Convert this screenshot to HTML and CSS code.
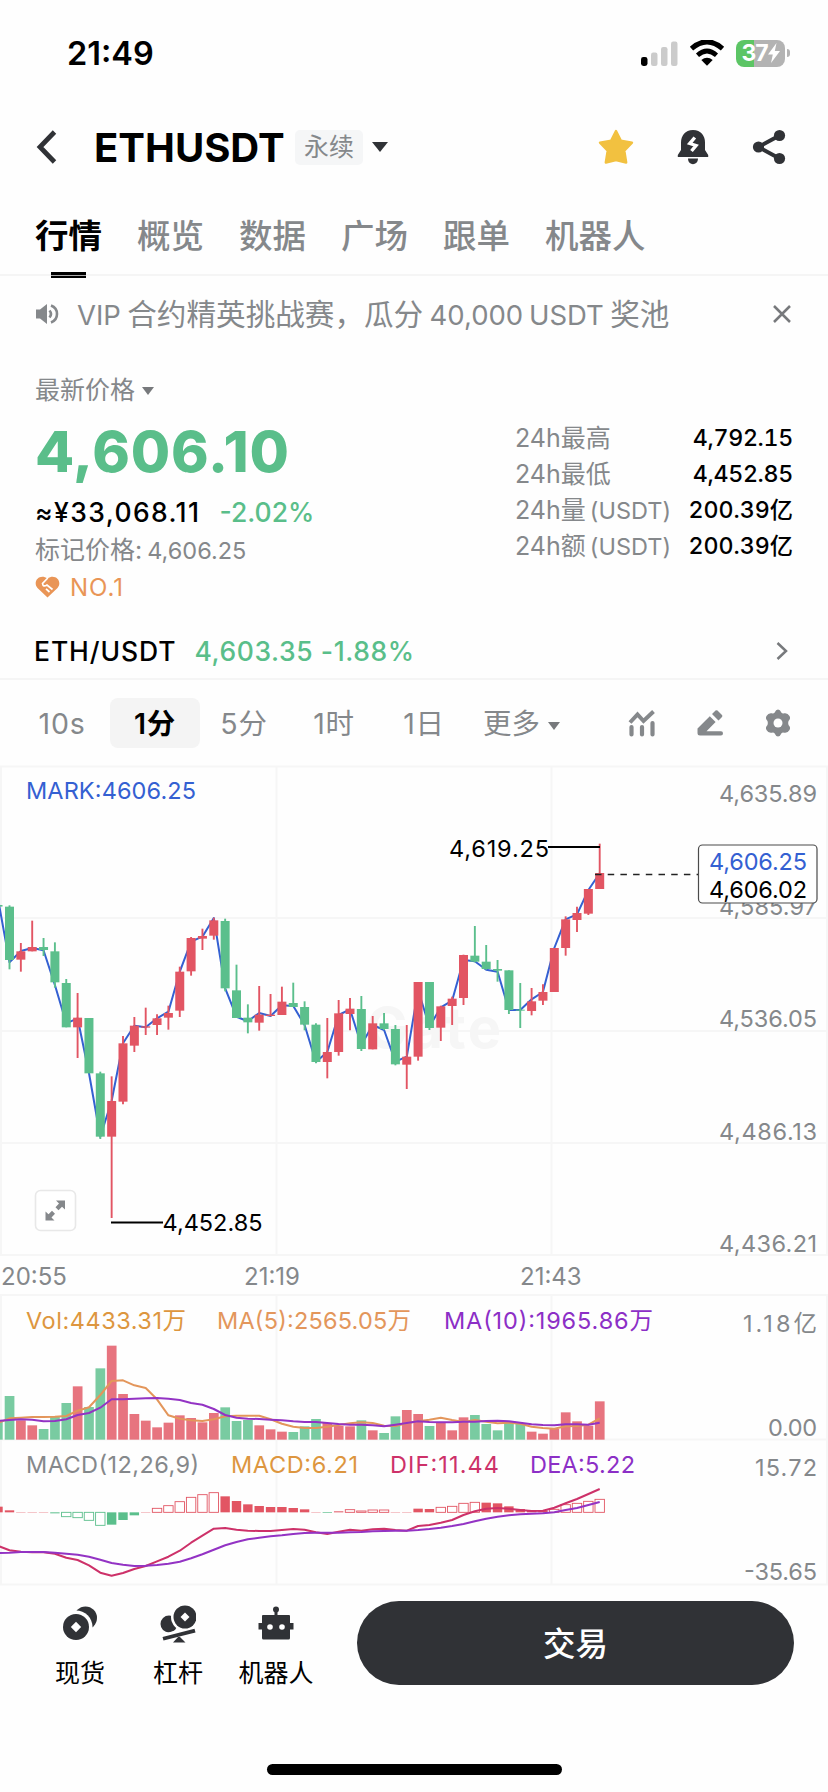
FILE: index.html
```html
<!DOCTYPE html>
<html lang="zh-CN">
  <head>
    <meta charset="utf-8">
    <title>ETHUSDT 永续</title>
    <link rel="stylesheet" href="styles.css">
  </head>
  <body>
    <div class="statusbar">
      <span class="clock">21:49</span>
      <div class="status-icons">
        <svg width="37" height="25" viewBox="0 0 37 25">
          <rect x="0" y="16" width="6.5" height="9" rx="2.4" fill="#000"/>
          <rect x="10" y="11.5" width="6.5" height="13.5" rx="2.2" fill="#cbcbcb"/>
          <rect x="20" y="6" width="6.5" height="19" rx="2.2" fill="#cbcbcb"/>
          <rect x="30" y="0.5" width="6.5" height="24.5" rx="2.2" fill="#cbcbcb"/>
        </svg>
        <svg class="wifi" width="36" height="26" viewBox="0 0 36 26">
          <path d="M2.5 8.6 Q18 -5 33.500 8.600" fill="none" stroke="#000" stroke-width="5"/>
          <path d="M8.500 15.200 Q18 6.800 27.500 15.200" fill="none" stroke="#000" stroke-width="4.600"/>
          <path d="M12.300 20 Q18 15.500 23.700 20 L18 25.800 Z"/>
        </svg>
        <div class="battery">37<svg width="12" height="20" viewBox="0 0 12 20"><path d="M8.500 0 L0 11.500 H4.800 L3 20 L12 8 H6.800 Z" fill="#fff"/></svg></div>
        <i class="battery-tip"></i>
      </div>
    </div>

    <header class="header">
      <svg class="back" width="22" height="34" viewBox="0 0 22 34"><path d="M19.500 2 L5 17 L19.500 32" fill="none" stroke="#303236" stroke-width="4.800"/></svg>
      <h1>ETHUSDT</h1>
      <span class="badge">永续</span>
      <i class="caret caret-big"></i>
      <div class="header-icons">
        <svg width="36" height="36" viewBox="0 0 36 36"><path d="M18 2 L22.800 11.600 L34 13.600 L26.300 21.700 L28.200 33.500 L18 31 L7.800 33.500 L9.700 21.700 L2 13.600 L13.200 11.600 Z" fill="#f2c140" stroke="#f2c140" stroke-width="2.400" stroke-linejoin="round"/></svg>
        <svg width="32" height="36" viewBox="0 0 32 36">
          <path d="M16 1 C8 1 4 7 4 13.500 V21 L0.800 26 V28 H31.200 V26 L28 21 V13.500 C28 7 24 1 16 1 Z M11 29.500 H21 C21 37 11 37 11 29.500 Z" fill="#303236"/>
          <path d="M17.800 8.500 L12.800 14.500 L19 16.500 L14.500 22" fill="none" stroke="#fff" stroke-width="3.400"/>
        </svg>
        <svg width="34" height="36" viewBox="0 0 34 36">
          <path d="M27.500 6.500 L6.500 18 L27.500 29.500" fill="none" stroke="#303236" stroke-width="4"/>
          <circle cx="27.500" cy="6.500" r="5.600" fill="#303236"/><circle cx="6.500" cy="18" r="5.600" fill="#303236"/><circle cx="27.500" cy="29.500" r="5.600" fill="#303236"/>
        </svg>
      </div>
    </header>

    <nav class="tabs">
      <a class="active">行情</a><a>概览</a><a>数据</a><a>广场</a><a>跟单</a><a>机器人</a>
    </nav>

    <div class="notice">
      <svg width="23" height="22" viewBox="0 0 23 22">
        <path d="M0 6.500 H4 L11 1 V21 L4 15.500 H0 Z" fill="#85888b"/>
        <path d="M13.500 7.500 Q16.500 11 13.500 14.500 M15 2.500 C23 5.500 23 16.500 15 19.500" fill="none" stroke="#85888b" stroke-width="2.600"/>
      </svg>
      <span class="notice-text"><b>VIP</b> 合约精英挑战赛，瓜分 <b>40,000 USDT</b> 奖池</span>
      <svg class="close" width="18" height="18" viewBox="0 0 18 18"><path d="M1 1 L17 17 M17 1 L1 17" stroke="#77797c" stroke-width="2.500"/></svg>
    </div>

    <section class="ticker">
      <div class="price">
        <div class="price-type">最新价格 <i class="caret"></i></div>
        <div class="last">4,606.10</div>
        <div class="fiat"><span class="cny">≈¥33,068.11</span><span class="change">-2.02%</span></div>
        <div class="mark">标记价格: <span>4,606.25</span></div>
        <div class="rank">
          <svg width="25" height="22" viewBox="0 0 25 22">
            <path d="M12.500 21.500 L2.500 12 C-3 5 5 -3 12.500 2.500 C20 -3 28 5 22.500 12 Z" fill="#e99556"/>
            <path d="M12.800 2 L7.500 7.500 Q8 11.500 12 9 L17.500 13.500 M11 12.800 L14.500 16" fill="none" stroke="#fff" stroke-width="1.700"/>
          </svg>
          NO.1
        </div>
      </div>
      <dl class="stats">
        <dt>24h最高</dt><dd>4,792.15</dd>
        <dt>24h最低</dt><dd>4,452.85</dd>
        <dt>24h量 <span>(USDT)</span></dt><dd class="amount">200.39亿</dd>
        <dt>24h额 <span>(USDT)</span></dt><dd class="amount">200.39亿</dd>
      </dl>
    </section>

    <div class="spot">
      <span class="spot-pair">ETH/USDT</span>
      <span class="spot-price">4,603.35 -1.88%</span>
      <svg width="12" height="18" viewBox="0 0 12 18"><path d="M1.500 1 L10 9 L1.500 17" fill="none" stroke="#77797c" stroke-width="2.500"/></svg>
    </div>

    <div class="intervals">
      <div class="interval-list">
        <span>10s</span><span class="active">1分</span><span>5分</span><span>1时</span><span>1日</span><span class="more">更多<i class="caret"></i></span>
      </div>
      <div class="tools">
        <svg width="28" height="28" viewBox="0 0 28 28">
          <path d="M2 13.500 L9.500 5.500 L15.500 12 L25.500 2.500" fill="none" stroke="#85888b" stroke-width="4"/>
          <path d="M3.500 18 V25.500 M14 18 V25.500 M24.500 14 V25.500" stroke="#85888b" stroke-width="4.200" stroke-linecap="round"/>
        </svg>
        <svg width="27" height="27" viewBox="0 0 27 27">
          <path d="M12.800 7.200 L18.600 13 L9.500 22.300 H24 Q26 22.300 26 24.300 Q26 26.500 24 26.500 H3 Q0.500 26.500 0.500 24 V19.500 Z M18.500 1.500 Q19.500 0.800 20.500 1.500 L25 6 Q25.800 7 25 8 L21.500 11.500 L15 5 Z" fill="#85888b"/>
        </svg>
        <svg width="26" height="28" viewBox="0 0 26 28">
          <path d="M13 0.500 Q15 0.500 16.500 3.800 Q17.500 4.800 19 4.300 Q22.500 3.500 24.500 7 Q26 9.500 23.500 12 Q22.800 14 23.500 16 Q26 18.500 24.500 21 Q22.500 24.500 19 23.700 Q17.500 23.200 16.500 24.200 Q15 27.500 13 27.500 Q11 27.500 9.500 24.200 Q8.500 23.200 7 23.700 Q3.500 24.500 1.500 21 Q0 18.500 2.500 16 Q3.200 14 2.500 12 Q0 9.500 1.500 7 Q3.500 3.500 7 4.300 Q8.500 4.800 9.500 3.800 Q11 0.500 13 0.500 Z" fill="#85888b"/>
          <circle cx="13" cy="14" r="4.500" fill="#fff"/>
        </svg>
      </div>
    </div>

    <section class="charts">
      <svg id="kline" width="828" height="490" viewBox="0 6 828 490">
        <g class="grid"><path d="M0 6.500 H828 M0 158 H828 M0 271 H828 M0 383 H828 M0 495 H828 M1 6 V496 M276.500 6 V496 M551.500 6 V496 M827 6 V496"/></g>
        <text class="watermark" x="366" y="288" textLength="135">Gate</text>
        <g id="candles"></g>
        <g class="axis">
          <text x="817" y="42" textLength="98">4,635.89</text>
          <text x="817" y="155" textLength="98">4,585.97</text>
          <text x="817" y="267" textLength="98">4,536.05</text>
          <text x="817" y="380" textLength="98">4,486.13</text>
          <text x="817" y="492" textLength="98">4,436.21</text>
        </g>
        <text x="26" y="39" class="mark-label" textLength="170">MARK:4606.25</text>
        <path d="M548 87 H600 M111 462.500 H163" stroke="#000" stroke-width="2"/>
        <text x="449" y="96.500" class="peak" textLength="100">4,619.25</text>
        <text x="162.500" y="471" class="peak" textLength="100">4,452.85</text>
        <path d="M595 114.500 H698" stroke="#222" stroke-width="1.700" stroke-dasharray="6.500 6.200"/>
        <rect x="698.500" y="85" width="118.500" height="58" rx="4" fill="#fff" stroke="#4b4b4b" stroke-width="1.200"/>
        <text x="709" y="110" class="tag blue" textLength="98">4,606.25</text>
        <text x="709" y="138" class="tag" textLength="98">4,606.02</text>
        <rect x="35.500" y="430.500" width="40" height="40" rx="5" fill="#fff" stroke="#e8e8e8" stroke-width="1.600"/>
        <path d="M56 440.500 H65 V449.500 L62 446.700 L58.500 450.200 L55.500 447.200 L59 443.500 Z M45.500 451.500 L48.500 454.300 L52 450.800 L55 453.800 L51.500 457.500 L54.500 460.500 H45.500 Z" fill="#85888b"/>
      </svg>
      <div class="times"><span>20:55</span><span>21:19</span><span>21:43</span></div>
      <svg id="volume" width="828" height="146" viewBox="0 44 828 146">
        <g class="grid"><path d="M0 45 H828 M0 189.500 H828 M1 44 V190 M276.500 44 V190 M551.500 44 V190 M827 44 V190"/></g>
        <g id="vol"></g>
        <text x="26" y="79" fill="#dd963f" textLength="160">Vol:4433.31万</text>
        <text x="217" y="79" fill="#e3965b" textLength="194">MA(5):2565.05万</text>
        <text x="444" y="79" fill="#8c2fc6" textLength="209">MA(10):1965.86万</text>
        <g class="axis"><text x="817" y="82" textLength="74">1.18亿</text><text x="817" y="186" textLength="49">0.00</text></g>
      </svg>
      <svg id="macdChart" width="828" height="145" viewBox="0 190 828 145">
        <g class="grid"><path d="M0 334.500 H828 M1 190 V335 M276.500 190 V335 M551.500 190 V335 M827 190 V335"/></g>
        <g id="macd"></g>
        <text x="26" y="223" fill="#85888b" textLength="173">MACD(12,26,9)</text>
        <text x="231" y="223" fill="#dd963f" textLength="127">MACD:6.21</text>
        <text x="390" y="223" fill="#cd3169" textLength="109">DIF:11.44</text>
        <text x="530" y="223" fill="#8c2fc6" textLength="105">DEA:5.22</text>
        <g class="axis"><text x="817" y="226" textLength="62">15.72</text><text x="817" y="330" textLength="73">-35.65</text></g>
      </svg>
    </section>

    <footer class="bottom">
      <a class="nav-item">
        <svg width="36" height="38" viewBox="0 0 36 38">
          <circle cx="23.500" cy="13" r="11.500" fill="#303236"/>
          <circle cx="14" cy="22" r="16.500" fill="#fff"/>
          <circle cx="14" cy="22" r="13" fill="#303236"/>
          <path d="M14 16.800 L19.200 22 L14 27.200 L8.800 22 Z" fill="#fff"/>
        </svg>现货</a>
      <a class="nav-item">
        <svg width="36" height="38" viewBox="0 0 36 38">
          <circle cx="9" cy="19" r="8.500" fill="#303236"/>
          <path d="M0 30 L36 19.500 L36 26 L0 37 Z" fill="#fff"/>
          <circle cx="25" cy="12" r="14" fill="#fff"/>
          <circle cx="25" cy="12" r="11.500" fill="#303236"/>
          <path d="M25 7.500 L29.500 12 L25 16.500 L20.500 12 Z" fill="#fff"/>
          <path d="M2.500 32 L3.500 35.500 L35.500 27.500 L34.500 23.800 Z M19 31 L25.500 37.500 H13 Z" fill="#303236"/>
        </svg>杠杆</a>
      <a class="nav-item">
        <svg width="36" height="38" viewBox="0 0 36 38">
          <path d="M16.500 3 V10 H5 Q4 10 4 11 V18 H0.500 V24.500 H4 V33 Q4 34.500 5.500 34.500 H30.500 Q32 34.500 32 33 V24.500 H35.500 V18 H32 V11 Q32 10 31 10 H19.500 V3 Z" fill="#303236"/>
          <circle cx="18" cy="4.500" r="3" fill="#303236"/>
          <circle cx="12" cy="22" r="2.800" fill="#fff"/><circle cx="24" cy="22" r="2.800" fill="#fff"/>
        </svg>机器人</a>
      <button class="trade">交易</button>
    </footer>
    <div class="home-indicator"></div>
    <script src="chart.js"></script>
  </body>
</html>
```
FILE: styles.css
```css
* {
  box-sizing: border-box;
}
body {
  margin: 0;
  width: 828px;
  height: 1792px;
  overflow: hidden;
  background: #fefefe;
  color: #000;
  font-family: Inter, "Noto Sans CJK SC", sans-serif;
}
svg {
  display: block;
  flex: none;
}
.caret {
  display: inline-block;
  border: 6.5px solid transparent;
  border-top: 8px solid #77797c;
  border-bottom: 0;
}
.caret-big {
  border-width: 10px 8.5px 0;
  border-top-color: #303236;
  margin-left: 9px;
}

.statusbar {
  height: 106px;
  padding: 0 38px 0 67px;
  display: flex;
  align-items: center;
  justify-content: space-between;
}
.clock {
  font-size: 32.5px;
  font-weight: 600;
}
.status-icons {
  display: flex;
  align-items: center;
}
.wifi {
  margin: 0 11px 0 11px;
}
.battery {
  width: 49px;
  height: 27px;
  border-radius: 8px;
  background: linear-gradient(90deg, #5cc565 18px, #b3b3b3 18px);
  color: #fff;
  font-size: 23px;
  font-weight: 700;
  letter-spacing: -1px;
  display: flex;
  align-items: center;
  justify-content: center;
}
.battery-tip {
  width: 3px;
  height: 8px;
  margin-left: 2px;
  border-radius: 0 4px 4px 0;
  background: #b3b3b3;
}

.header {
  height: 82px;
  padding: 0 42px 0 35px;
  display: flex;
  align-items: center;
}
.header h1 {
  width: 191px;
  margin: 0 10px 0 37px;
  font-size: 40px;
  font-weight: 700;
  white-space: nowrap;
}
.badge {
  width: 68px;
  height: 35px;
  line-height: 34px;
  border-radius: 5px;
  background: #f5f6f7;
  color: #85888b;
  font-size: 25px;
  text-align: center;
}
.header-icons {
  margin-left: auto;
  display: flex;
  gap: 43px;
}

.tabs {
  height: 88px;
  padding: 0 35px;
  border-bottom: 2px solid #f5f5f5;
  display: flex;
  gap: 35px;
  color: #85888b;
  font-size: 33.5px;
  font-weight: 500;
  line-height: 97px;
}
.tabs .active {
  position: relative;
  color: #000;
  font-weight: 700;
}
.tabs .active::after {
  content: "";
  position: absolute;
  left: 16px;
  top: 84px;
  width: 35px;
  height: 1px;
  border: solid #000;
  border-width: 3px 0 2px;
  background: #aaa;
}

.notice {
  height: 76px;
  padding: 0 37px 0 36px;
  display: flex;
  align-items: center;
  color: #85888b;
}
.notice-text {
  margin: -4px 0 0 18px;
  font-size: 29.6px;
  word-spacing: -2px;
  white-space: nowrap;
}
.notice-text b {
  font-weight: 400;
  font-size: 27.5px;
}
.close {
  margin-left: auto;
}

.ticker {
  height: 271px;
  padding: 20px 35px 0;
  display: flex;
  justify-content: space-between;
}
.price-type {
  height: 36px;
  line-height: 36px;
  font-size: 25px;
  color: #85888b;
}
.price-type .caret {
  vertical-align: 4px;
}
.last {
  height: 87px;
  line-height: 87px;
  font-size: 57px;
  font-weight: 800;
  letter-spacing: 0.8px;
  color: #5abe8a;
}
.fiat {
  height: 35px;
  line-height: 35px;
  font-size: 26.5px;
  font-weight: 500;
}
.cny {
  letter-spacing: 1.4px;
}
.change {
  margin-left: 19px;
}
.change,
.spot-price {
  color: #5abe8a;
}
.mark {
  height: 40px;
  line-height: 40px;
  font-size: 25px;
  word-spacing: -2px;
  color: #85888b;
}
.mark span {
  font-size: 23.5px;
}
.rank {
  height: 34px;
  display: flex;
  align-items: center;
  gap: 10px;
  font-size: 24px;
  letter-spacing: 1px;
  color: #e99556;
}
.stats {
  width: 278px;
  margin: 48px 0 0;
  display: grid;
  grid-template-columns: auto auto;
  grid-auto-rows: 36px;
  align-content: start;
  line-height: 36px;
  font-size: 24px;
  white-space: nowrap;
}
.stats dt {
  font-size: 25px;
  word-spacing: -3px;
  color: #85888b;
}
.stats dt span {
  font-size: 23.5px;
}
.stats dd {
  margin: 0;
  text-align: right;
  font-size: 23.2px;
  font-weight: 500;
  font-variant-numeric: tabular-nums;
  letter-spacing: -0.3px;
}
.stats .amount {
  letter-spacing: 0;
}

.spot {
  height: 57px;
  padding: 0 40px 0 34px;
  border-bottom: 2px solid #f5f5f5;
  display: flex;
  align-items: center;
  font-size: 26.5px;
  font-weight: 500;
}
.spot-pair {
  letter-spacing: 0.9px;
}
.spot-price {
  margin-left: 18px;
  letter-spacing: 0.6px;
}
.spot svg {
  margin-left: auto;
}

.intervals {
  height: 86px;
  padding: 0 37px 0 17px;
  display: flex;
  align-items: center;
  justify-content: space-between;
  font-size: 28.5px;
  color: #85888b;
}
.interval-list {
  display: flex;
}
.interval-list span {
  width: 90px;
  height: 50px;
  line-height: 51px;
  text-align: center;
  border-radius: 8px;
  letter-spacing: 0.8px;
}
.interval-list .active {
  margin-left: 3px;
  margin-right: -1px;
  background: #f4f4f4;
  color: #000;
  font-weight: 600;
}
.interval-list .more {
  width: auto;
  margin-left: 14px;
  letter-spacing: 0;
}
.more .caret {
  margin-left: 8px;
  vertical-align: 4px;
}
.tools {
  display: flex;
  gap: 41px;
}

.charts svg {
  overflow: visible;
}
.charts text {
  font-size: 23.5px;
}
.grid path {
  fill: none;
  stroke: #f6f6f6;
  stroke-width: 2;
}
.axis text {
  fill: #85888b;
  text-anchor: end;
}
.charts .watermark {
  font-size: 56px;
  font-weight: 700;
  fill: #f6f6f6;
}
.mark-label,
.charts .blue {
  fill: #3460d2;
}
.up {
  fill: #e25563;
  stroke: #e25563;
}
.down {
  fill: #5bbf8c;
  stroke: #5bbf8c;
}
.line {
  fill: none;
  stroke-width: 2;
  stroke-linejoin: round;
}
.times {
  height: 38px;
  padding-left: 1px;
  display: grid;
  grid-template-columns: 243px 276px auto;
  line-height: 42px;
  font-size: 24px;
  color: #85888b;
}

.bottom {
  height: 179px;
  padding: 16px 34px 0 31px;
  display: flex;
  align-items: flex-start;
}
.nav-item {
  width: 98px;
  padding-top: 4px;
  display: flex;
  flex-direction: column;
  align-items: center;
  gap: 12px;
  font-size: 25px;
  line-height: 36px;
}
.trade {
  width: 437px;
  height: 84px;
  margin-left: auto;
  padding: 0 0 3px;
  border: 0;
  border-radius: 42px;
  background: #303236;
  color: #fff;
  font: 500 32.5px Inter, "Noto Sans CJK SC", sans-serif;
}
.home-indicator {
  width: 295px;
  height: 11px;
  margin: 0 auto;
  border-radius: 6px;
  background: #000;
}
```
FILE: chart.js
```js
// one third of a pixel per unit, candles are 34 units apart
var K = 1 / 3;
var NS = 'http://www.w3.org/2000/svg';

function cx(i) {
  return 9.5 + i * 11.35;
}

function add(parent, name, attrs) {
  var el = document.createElementNS(NS, name);
  for (var key in attrs) {
    el.setAttribute(key, attrs[key]);
  }
  document.getElementById(parent).appendChild(el);
}

// the first value belongs to the candle that is cut off on the left
function line(parent, values, color) {
  var points = values.map(function(v, i) {
    return cx(i - 1).toFixed(1) + ',' + (v * K).toFixed(1);
  });
  add(parent, 'polyline', { points: points.join(' '), 'class': 'line', stroke: color });
}

// direction, high, body top, body bottom, low
var candles = [
  ['g',436,440,600,628],['r',549,574,599,635],['r',482,561,574,574],['g',534,561,570,588],
  ['g',547,574,667,683],['g',657,669,802,802],['r',699,773,802,894],['g',774,774,940,940],
  ['g',935,940,1130,1137],['r',949,1023,1130,1374],['r',828,850,1025,1033],['r',771,797,857,876],
  ['r',743,799,803,825],['r',763,775,795,825],['r',737,759,773,809],['r',620,635,752,771],
  ['r',531,534,634,647],['r',506,528,536,570],['r',473,481,527,539],['g',476,483,685,694],
  ['g',614,691,774,774],['g',733,773,787,820],['r',678,764,788,812],['r',702,764,768,769],
  ['r',680,725,765,765],['g',668,729,741,741],['g',724,741,794,811],['g',790,794,906,910],
  ['r',774,876,906,955],['r',720,760,876,887],['r',714,746,762,811],['g',708,747,867,873],
  ['r',768,790,868,868],['g',759,790,807,810],['g',795,807,913,916],['r',795,890,914,987],
  ['r',666,666,890,902],['g',666,666,804,810],['r',737,739,803,843],['r',710,716,738,795],
  ['r',584,585,714,735],['g',498,587,605,607],['g',555,605,627,629],['g',600,627,632,665],
  ['g',631,631,750,762],['g',669,749,752,804],['r',684,724,753,766],['r',673,696,722,735],
  ['r',564,564,696,696],['r',469,478,564,587],['r',440,459,480,516],['r',387,387,461,465],
  ['r',251,339,387,387]
];
var mark = [420,607,573,564,571,675,790,775,940,1130,1023,850,797,802,775,755,635,545,530,474,685,
  770,784,759,768,736,738,795,906,876,765,748,855,795,810,905,890,690,800,742,722,600,604,629,635,
  750,750,718,696,564,478,463,390,340];

line('candles', mark, '#3460d2');
add('candles', 'rect', { x: 0, y: 145, width: 2.5, height: 1.6, 'class': 'down', 'stroke-width': 0 });
candles.forEach(function(c, i) {
  var cls = c[0] == 'r' ? 'up' : 'down';
  add('candles', 'path', { d: 'M' + cx(i) + ' ' + c[1] * K + 'V' + c[4] * K, 'class': cls, 'stroke-width': 1.9 });
  add('candles', 'rect', { x: cx(i) - 4.5, y: c[2] * K, width: 9, height: (c[3] - c[2]) * K, 'class': cls, 'stroke-width': 0 });
});

// bar tops, 569 is the zero line
var vol = [438,511,526,537,500,459,409,471,355,287,432,492,512,532,518,496,504,517,489,472,513,510,
  526,538,545,546,529,507,519,528,529,511,541,549,499,480,492,528,519,541,502,495,522,541,519,522,
  545,551,537,487,514,527,454];
add('vol', 'rect', { x: 0, y: 516 * K, width: 2.7, height: 53 * K, 'class': 'down', 'stroke-width': 0, opacity: 0.82 });
vol.forEach(function(v, i) {
  add('vol', 'rect', { x: cx(i) - 4.8, y: v * K, width: 9.7, height: (569 - v) * K,
    'class': candles[i][0] == 'r' ? 'up' : 'down', 'stroke-width': 0, opacity: 0.82 });
});
line('vol', [519,505,503,501,501,500,498,482,472,435,393,391,406,414,448,496,506,511,513,508,499,497,
  497,497,508,521,530,534,534,530,525,520,517,519,527,528,520,514,509,503,510,516,510,515,520,518,
  521,530,534,536,529,528,524,505], '#e3965b');
line('vol', [513,510,508,509,514,513,508,495,489,473,448,448,446,445,444,446,450,459,464,477,495,503,
  506,507,509,511,514,516,516,519,522,524,524,526,529,524,519,514,516,517,517,515,515,513,512,514,
  518,523,525,526,523,523,524,518], '#9333c4');

// bar ends, 787 is the zero line; h marks the hollow bars
var macd = [781,786,786,786,790,'h800','h803','h811','h826',824,810,796,786,'h775','h767','h755','h742',
  'h734','h728',739,753,763,768,771,771,774,778,786,789,784,'h779','h783','h780','h780',786,786,776,
  777,'h772','h769','h760','h757',758,760,769,777,781,782,'h778','h764','h760','h754','h748'];
add('macd', 'rect', { x: 0, y: 770 * K, width: 2.7, height: 17 * K, 'class': 'up', 'stroke-width': 0 });
macd.forEach(function(m, i) {
  var hollow = String(m)[0] == 'h';
  var v = hollow ? Number(m.slice(1)) : m;
  var top = Math.min(v, 787) * K;
  var height = Math.abs(v - 787) * K;
  var attrs = { x: cx(i) - 4.7, y: top, width: 9.4, height: height, 'class': v > 787 ? 'down' : 'up', 'stroke-width': 0 };
  if (hollow) {
    attrs['stroke-width'] = 0.9;
    attrs.style = 'fill: #fff';
  }
  add('macd', 'rect', attrs);
});
line('macd', [888,901,905,907,907,911,923,930,946,968,977,969,957,948,934,920,902,878,857,836,834,839,
  842,843,843,840,837,839,847,852,845,839,842,838,836,840,842,828,825,818,810,795,784,776,774,776,
  780,783,782,773,760,747,732,717], '#cd3169');
line('macd', [909,908,906,906,906,908,911,914,920,929,939,944,948,947,945,941,935,925,913,899,886,876,
  868,863,859,856,852,849,848,848,848,847,846,844,843,842,842,840,837,833,828,822,814,806,800,796,
  793,791,790,787,780,774,765,756], '#9333c4');
```
